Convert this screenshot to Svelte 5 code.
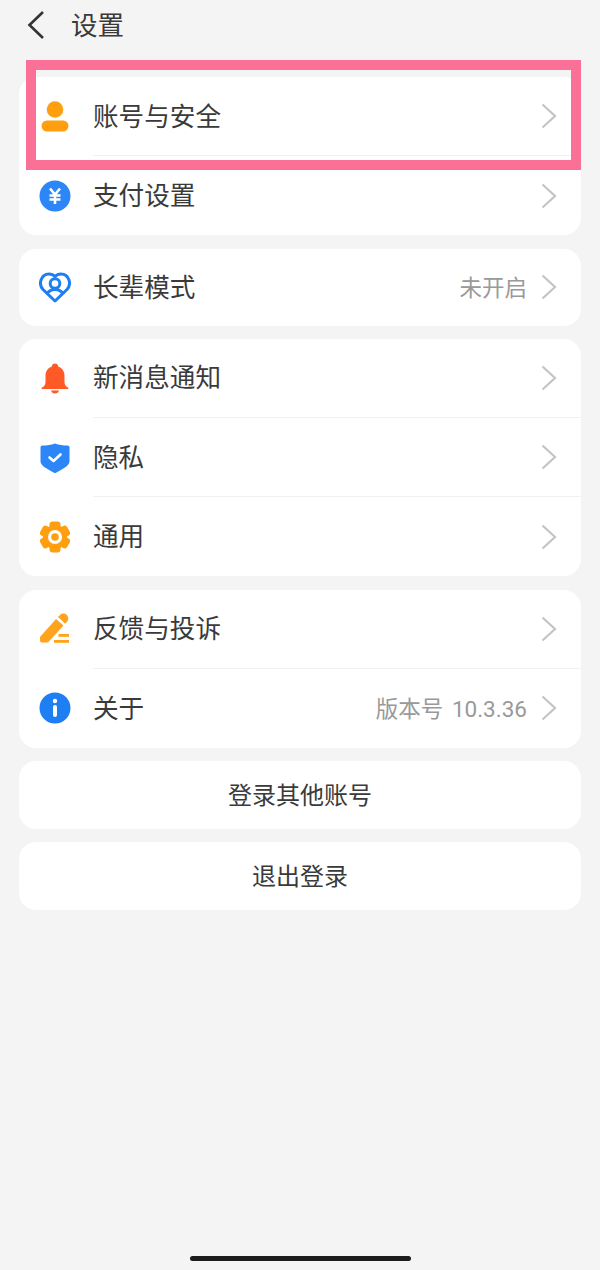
<script>
  const sections = [
    [{ icon: 'user', label: '账号与安全' }, { icon: 'pay', label: '支付设置' }],
    [{ icon: 'heart', label: '长辈模式', value: '未开启' }],
    [{ icon: 'bell', label: '新消息通知' }, { icon: 'shield', label: '隐私' }, { icon: 'gear', label: '通用' }],
    [{ icon: 'pen', label: '反馈与投诉' }, { icon: 'info', label: '关于', value: '版本号 10.3.36' }]
  ];
  const teeth = [0, 60, 120];
</script>

<main class="page">
  <header class="top">
    <svg class="back" viewBox="0 0 20 30" width="20" height="30"><path d="M17 2 L3.5 15 L17 28" /></svg>
    <h1>设置</h1>
  </header>

  <div class="list">
    {#each sections as rows}
      <section class="card">
        {#each rows as row, i}
          <div class="row" class:single={rows.length === 1}>
            <span class="ico">
              <svg viewBox="0 0 32 32" width="32" height="32">
                {#if row.icon === 'user'}
                  <circle cx="16" cy="8.5" r="8.3" fill="#ff9f0f" />
                  <rect x="2.5" y="19.5" width="27" height="11" rx="5.5" fill="#ff9f0f" />
                {:else if row.icon === 'pay'}
                  <circle cx="16" cy="16" r="15.5" fill="#2d86f7" />
                  <path d="M11 8.5 L16 14.5 L21 8.5 M10.5 15.5 H21.5 M10.5 19.5 H21.5 M16 14.5 V24" fill="none" stroke="#fff" stroke-width="2.6" />
                {:else if row.icon === 'heart'}
                  <path d="M16 30 L4 18.5 C-1 13 2 3 10 3 C12.6 3 14.6 4 16 5.5 C17.4 4 19.4 3 22 3 C30 3 33 13 28 18.5 Z" fill="none" stroke="#1d7ff2" stroke-width="3" stroke-linejoin="round" />
                  <circle cx="16" cy="12.5" r="4.8" fill="none" stroke="#1d7ff2" stroke-width="3" />
                  <path d="M7.5 23 C10 19.5 13 18.5 16 18.5 C19 18.5 22 19.5 24.5 23" fill="none" stroke="#1d7ff2" stroke-width="3" />
                {:else if row.icon === 'bell'}
                  <path d="M16 1.5 C18 1.5 19 2.8 19.2 4.5 C23.5 6 25.5 9.5 25.5 14 V20 C25.5 23 27 24.5 29 25.5 C29.8 26 29.6 27 28.6 27 H3.4 C2.4 27 2.2 26 3 25.5 C5 24.5 6.5 23 6.5 20 V14 C6.5 9.5 8.5 6 12.8 4.5 C13 2.8 14 1.5 16 1.5 Z" fill="#ff5a26" />
                  <path d="M12 28.5 H20 C19.6 30.5 18 31.5 16 31.5 C14 31.5 12.4 30.5 12 28.5 Z" fill="#ff5a26" />
                {:else if row.icon === 'shield'}
                  <path d="M16 1.5 C20 3 24 3.5 28.5 3.5 C29.6 3.5 30.5 4.4 30.5 5.5 V19 C30.5 23 27 25.5 16.5 31 C16.2 31.2 15.8 31.2 15.5 31 C5 25.5 1.5 23 1.5 19 V5.5 C1.5 4.4 2.4 3.5 3.5 3.5 C8 3.5 12 3 16 1.5 Z" fill="#2d86f7" />
                  <path d="M10.5 15.5 L14.5 19 L21.5 12.5" fill="none" stroke="#fff" stroke-width="2.6" stroke-linecap="round" stroke-linejoin="round" />
                {:else if row.icon === 'gear'}
                  {#each teeth as a}
                    <rect x="10.5" y="0.5" width="11" height="31" rx="3" fill="#ff9f0f" transform="rotate({a} 16 16)" />
                  {/each}
                  <circle cx="16" cy="16" r="12" fill="#ff9f0f" />
                  <circle cx="16" cy="16" r="7" fill="#fff" />
                  <circle cx="16" cy="16" r="3.8" fill="#ff9f0f" />
                {:else if row.icon === 'pen'}
                  <path d="M1 24 L17 6 L24.5 12.5 L9 29.5 H3 C1.8 29.5 1 28.7 1 27.5 Z" fill="#ffa41c" />
                  <path d="M19 4 L21 2 C23 0 26 0.3 27.8 2 C29.7 3.8 30 6.8 28 8.8 L26.2 10.7 Z" fill="#ffa41c" />
                  <rect x="19.5" y="21" width="10.5" height="2.8" fill="#ffa41c" />
                  <rect x="15" y="27" width="15" height="2.8" fill="#ffa41c" />
                {:else if row.icon === 'info'}
                  <circle cx="16" cy="16" r="15.5" fill="#1d7ff2" />
                  <circle cx="16" cy="9" r="2.2" fill="#fff" />
                  <rect x="14" y="13" width="4" height="12" rx="2" fill="#fff" />
                {/if}
              </svg>
            </span>
            <div class="body" class:line={i < rows.length - 1}>
              <span class="label">{row.label}</span>
              {#if row.value}<span class="value">{row.value}</span>{/if}
              <svg class="chev" viewBox="0 0 16 26" width="16" height="26"><path d="M1.5 1.5 L14 13 L1.5 24.5" /></svg>
            </div>
          </div>
        {/each}
      </section>
    {/each}

    <button class="action">登录其他账号</button>
    <button class="action">退出登录</button>
  </div>

  <div class="home"></div>
  <div class="mark"></div>
</main>

<style>
  :global(body) {
    margin: 0;
    background: #f4f4f4;
  }
  .page {
    position: relative;
    width: 600px;
    height: 1270px;
    overflow: hidden;
    background: #f4f4f4;
    color: #3a3a3a;
    font-family: "Noto Sans CJK SC", "Noto Sans", sans-serif;
  }
  .top {
    display: flex;
    align-items: center;
    height: 50px;
    padding-left: 26px;
    gap: 25px;
  }
  .back path {
    fill: none;
    stroke: #333;
    stroke-width: 2.6;
  }
  h1 {
    margin: -2px 0 0;
    font-size: 26.5px;
    font-weight: 400;
    line-height: 50px;
  }
  .list {
    display: flex;
    flex-direction: column;
    gap: 13.2px;
    margin: 27px 19px 0;
  }
  .card {
    background: #fff;
    border-radius: 17px;
    overflow: hidden;
  }
  .row {
    display: flex;
    height: 79.2px;
  }
  .row.single {
    height: 77px;
  }
  .ico {
    flex: 0 0 74px;
    display: flex;
    align-items: center;
    justify-content: center;
    padding-right: 3px;
    box-sizing: border-box;
  }
  .body {
    flex: 1;
    display: flex;
    align-items: center;
    padding-right: 24px;
    box-sizing: border-box;
  }
  .line {
    border-bottom: 1px solid #f2f2f2;
  }
  .label {
    flex: 1;
    font-size: 25.6px;
    line-height: 1.2;
    padding-bottom: 2px;
  }
  .value {
    font-family: Roboto, "Noto Sans CJK SC", sans-serif;
    font-size: 22.5px;
    word-spacing: 3px;
    color: #999;
    margin-right: 14px;
    padding-bottom: 2px;
  }
  .chev path {
    fill: none;
    stroke: #c4c4c4;
    stroke-width: 2.2;
  }
  .action {
    height: 68px;
    border: 0;
    border-radius: 17px;
    background: #fff;
    color: #3a3a3a;
    font: 400 24px "Noto Sans CJK SC", "Noto Sans", sans-serif;
    padding: 0 0 4px;
  }
  .home {
    position: absolute;
    left: 190px;
    top: 1256px;
    width: 221px;
    height: 5px;
    border-radius: 3px;
    background: #1c1c1c;
  }
  .mark {
    position: absolute;
    left: 26px;
    top: 60px;
    width: 535px;
    height: 90px;
    border: 10px solid #fb7097;
  }
</style>
